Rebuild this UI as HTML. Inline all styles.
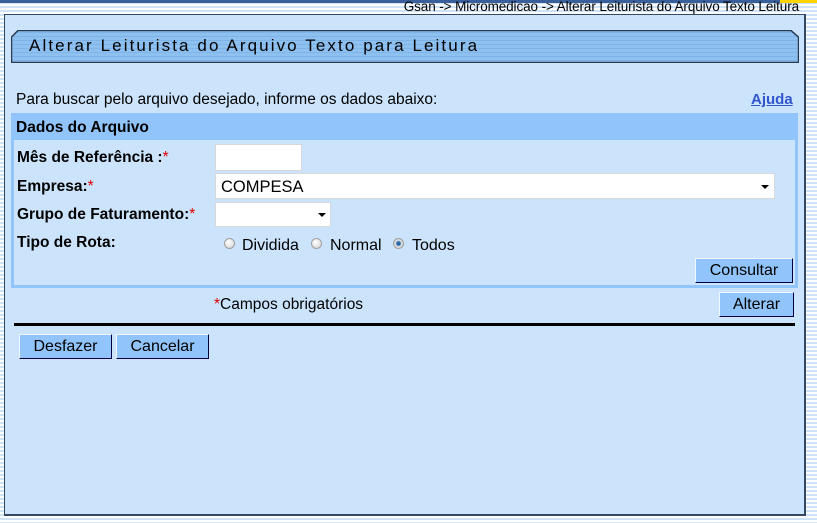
<!DOCTYPE html>
<html><head><meta charset="utf-8"><style>
*{margin:0;padding:0;box-sizing:border-box}
body{width:817px;height:523px;overflow:hidden;position:relative;font-family:"Liberation Sans",Arial,sans-serif;
background:repeating-linear-gradient(to bottom,#ffffff 0,#ffffff 2px,#cfe3f7 2px,#cfe3f7 4px);}
.a{position:absolute;white-space:nowrap}
.btn{position:absolute;background:#90c4fa;border:1px solid;border-color:#f0f8ff #000040 #000040 #f0f8ff;font-size:16px;color:#000;text-align:center;line-height:23px}
.lbl{position:absolute;left:17px;font-size:15.5px;font-weight:bold;color:#000;white-space:nowrap}
.req{color:#e00000;font-weight:normal}
.inp{position:absolute;background:#fff;border:1px solid #d8d8d8}
.arr{position:absolute;width:0;height:0;border-left:4px solid transparent;border-right:4px solid transparent;border-top:4px solid #000}
.rad{position:absolute;width:11px;height:11px;border-radius:50%;border:1px solid #a0a0a0;background:radial-gradient(circle at 40% 35%,#fff,#d0d0d0)}
</style></head><body>
<div class="a" style="left:0;top:0;width:780px;height:3px;background:#3a5f9a"></div>
<div class="a" style="left:780px;top:0;width:37px;height:3px;background:#ffd400"></div>
<div class="a" style="right:18px;top:-1px;font-size:13.5px;color:#000;letter-spacing:-0.1px">Gsan -&gt; Micromedicao -&gt; Alterar Leiturista do Arquivo Texto Leitura</div>
<div class="a" style="left:4px;top:14px;width:802px;height:502px;background:#cbe4fc;border:1px solid #34495e;border-width:1px 2px 2px 1px"></div>
<svg class="a" style="left:11px;top:30px" width="788" height="33">
<defs><pattern id="p" width="4" height="4" patternUnits="userSpaceOnUse"><rect width="4" height="4" fill="#8ec0f0"/><rect y="2" width="4" height="1" fill="#7fb4e8"/></pattern></defs>
<path d="M0.5 7 L7 0.5 L780 0.5 L787.5 7 L787.5 32.5 L0.5 32.5 Z" fill="url(#p)" stroke="#2a3a50" stroke-width="1.5"/>
</svg>
<div class="a" style="left:29px;top:36px;font-size:17px;letter-spacing:2.1px;color:#000">Alterar Leiturista do Arquivo Texto para Leitura</div>
<div class="a" style="left:16px;top:91px;font-size:15.5px">Para buscar pelo arquivo desejado, informe os dados abaixo:</div>
<div class="a" style="left:751px;top:91px;font-size:15px;font-weight:bold;color:#3355cc;text-decoration:underline">Ajuda</div>
<div class="a" style="left:11px;top:113px;width:787px;height:175px;border:3px solid #90c4fa;border-top:none"></div>
<div class="a" style="left:11px;top:113px;width:787px;height:27px;background:#90c4fa"></div>
<div class="a" style="left:16px;top:119px;font-size:15.5px;font-weight:bold">Dados do Arquivo</div>
<div class="lbl" style="top:149px">Mês de Referência :<span class="req">*</span></div>
<div class="inp" style="left:215px;top:144px;width:87px;height:27px"></div>
<div class="lbl" style="top:178px">Empresa:<span class="req">*</span></div>
<div class="inp" style="left:215px;top:173px;width:560px;height:26px"></div>
<div class="a" style="left:221px;top:178px;font-size:16.5px">COMPESA</div>
<div class="arr" style="left:761px;top:185px"></div>
<div class="lbl" style="top:206px">Grupo de Faturamento:<span class="req">*</span></div>
<div class="inp" style="left:215px;top:202px;width:116px;height:25px"></div>
<div class="arr" style="left:318px;top:213px"></div>
<div class="lbl" style="top:234px">Tipo de Rota:</div>
<div class="rad" style="left:224px;top:238px"></div>
<div class="a" style="left:242px;top:237px;font-size:16px">Dividida</div>
<div class="rad" style="left:311px;top:238px"></div>
<div class="a" style="left:330px;top:237px;font-size:16px">Normal</div>
<div class="rad" style="left:393px;top:238px;background:radial-gradient(circle,#1a4a80 0,#3a80c0 2px,#e0e0e0 3px,#c8c8c8 6px)"></div>
<div class="a" style="left:412px;top:237px;font-size:16px">Todos</div>
<div class="btn" style="left:695px;top:258px;width:98px;height:25px">Consultar</div>
<div class="a" style="left:214px;top:296px;font-size:15.5px"><span style="color:#e00000">*</span>Campos obrigatórios</div>
<div class="btn" style="left:719px;top:292px;width:75px;height:25px">Alterar</div>
<div class="a" style="left:14px;top:323px;width:781px;height:3px;background:#000"></div>
<div class="btn" style="left:19px;top:334px;width:93px;height:25px">Desfazer</div>
<div class="btn" style="left:116px;top:334px;width:93px;height:25px">Cancelar</div>
</body></html>
